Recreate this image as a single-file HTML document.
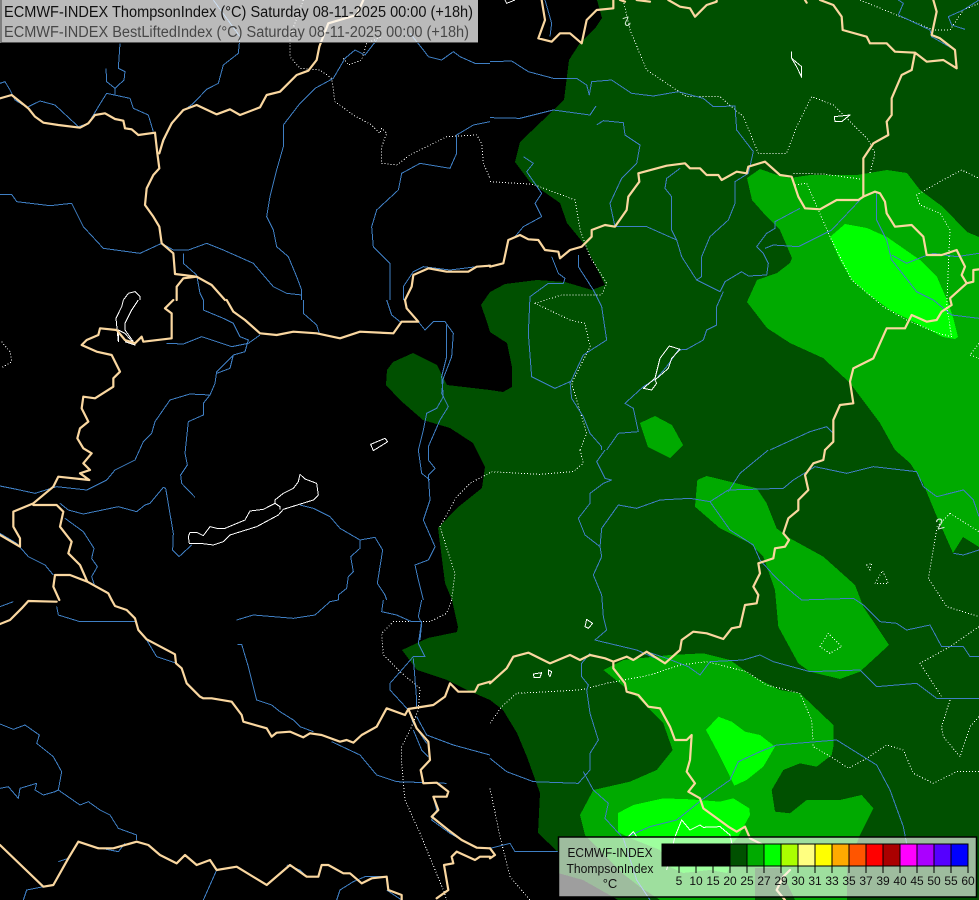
<!DOCTYPE html>
<html><head><meta charset="utf-8"><style>
html,body{margin:0;padding:0;background:#000}
svg{display:block}
path{fill:none;stroke-linejoin:round}
.b path,path.b{stroke:#fad7a0;stroke-width:6.6;shape-rendering:auto;stroke-linecap:round}
.r path,path.r{stroke:#3f7fc4;stroke-width:3}
.w path,path.w{stroke:#fff;stroke-width:3}
.d path,path.d{stroke:#fff;stroke-width:3;stroke-dasharray:3 6}
text{font-family:"Liberation Sans",sans-serif}
</style></head><body>
<svg width="979" height="900" viewBox="0 0 979 900" xmlns="http://www.w3.org/2000/svg" style="width:979px;height:900px;overflow:hidden">
<rect width="979" height="900" fill="#000"/>
<g shape-rendering="crispEdges">
<polygon fill="#005000" points="597,0 602,18 596,27 580,43 569,60 564,100 520,142 515,162 530,182 560,203 567,223 585,245 605,285 592,290 565,282 537,280 505,284 490,292 481,305 487,322 490,332 507,343 512,367 512,387 503,392 490,390 447,385 437,365 413,353 393,362 387,370 386,385 400,400 423,420 450,428 473,443 485,467 482,488 457,508 438,528 445,583 452,600 458,627 457,632 428,638 402,650 417,670 447,680 467,690 490,700 503,710 517,733 527,757 540,793 538,833 558,852 558,873 583,880 613,897 618,900 979,900 979,836 972,824 979,820 979,785 957,787 937,807 922,827 920,845 937,877 950,868 979,845 979,845 979,0"/>
<polygon fill="#00aa00" points="747,178 752,200 767,217 780,230 792,258 790,263 777,273 757,280 747,302 767,328 790,343 823,358 850,383 880,423 895,450 910,463 923,483 937,517 953,553 963,537 979,547 979,237 967,232 943,207 920,190 907,173 887,170 857,175 810,175 790,178 777,175 760,169"/>
<polygon fill="#00ff00" points="830,237 845,224 867,228 887,237 920,260 937,277 947,300 953,317 958,337 955,339 943,337 920,325 890,310 867,293 852,280 840,260"/>
<polygon fill="#00aa00" points="640,423 655,416 672,425 683,445 670,458 648,447"/>
<g transform="translate(490,450) scale(.33333)">
<polygon fill="#00aa00" points="615,170 622,90 650,78 800,115 830,160 860,235 900,265 1000,320 1095,405 1120,470 1197,585 1110,665 1050,687 960,665 925,640 865,530 855,420 820,320 780,280 690,235"/>
<polygon fill="#00aa00" points="340,660 400,630 540,615 640,610 720,630 790,680 870,720 930,730 1030,825 1030,890 1025,915 980,950 930,940 880,960 845,1020 855,1085 900,1090 950,1050 1050,1050 1115,1035 1150,1075 1110,1155 1071,1254 1071,1350 915,1350 870,1254 795,1254 795,1350 510,1350 450,1311 396,1269 285,1155 270,1095 310,1020 420,995 500,960 548,900 520,820 440,740"/>
<polygon fill="#00ff00" points="384,1089 430,1065 520,1045 600,1048 690,1055 730,1045 778,1075 780,1095 744,1161 729,1179 720,1251 711,1269 660,1260 579,1269 540,1251 510,1200 420,1164 384,1146"/>
<polygon fill="#00ff00" points="648,840 685,800 725,815 765,845 810,855 855,890 820,950 770,990 733,1007 715,970 680,900"/>
</g>

<g transform="scale(.33333)">
<path class="d" d="M910,0 870,110 870,170 900,205 960,210 995,235 1005,305 1060,345 1115,375 1140,400 1145,385 1160,400 1145,440 1145,490 1190,495 1230,465 1340,410 1430,405 1445,430 1450,490 1470,535M1030,175 1045,195 1085,180 1100,130 1145,110"/>
<path class="r" d="M0,250 15,245 30,270 45,300 85,325M85,320 120,303 165,315 235,380 265,370 295,320 320,280 390,295 400,325 445,345 460,395M360,130 355,205 375,215 372,240 345,265 345,285M318,205 320,245 345,265M640,0 720,110 715,160 670,195 655,250 620,268 580,310 540,340 510,380 480,450M1130,120 1095,165 1065,150 1035,175 1000,235 945,265 900,310 850,375 850,440 830,510 810,590 800,650 820,690 830,740 865,770 890,830 905,870 905,900M1470,365 1420,375 1370,405 1370,460 1350,505 1260,490 1205,520 1195,570 1130,630 1115,680 1120,740 1170,790 1170,900M1230,100 1270,150 1285,170 1325,180 1360,155 1380,170 1425,190 1470,190M0,583 35,583 50,605 150,617 215,610 250,680 310,745 420,760 485,730M485,730 520,750 565,750 620,730 670,750 760,790 820,860 860,880 905,885M550,760 550,790 590,825 600,880 610,900M1210,900 1210,860 1240,815 1270,800 1350,810 1470,795"/>
<path class="b" d="M0,295 35,285 60,305 85,325 105,350 130,368 175,375 240,383 265,370 285,345 315,340 345,357 370,362 375,385 395,388 415,405 465,398 472,460 478,505 460,525 440,565 435,615 460,650 478,680 485,730 520,760 525,822 550,825 590,830 635,855 675,900M478,460 490,420 515,370 550,330 590,315 650,343 690,328 720,345 780,322 800,285 840,275 890,225 925,212 950,180 958,140 985,70 1070,45 1090,0M590,830 550,835 530,860 530,900M1215,900 1235,860 1240,825 1285,805 1340,815 1405,815 1430,800 1470,797"/>
<path class="w" d="M370,900 385,880 405,875 420,890 420,900"/>
</g>

<g transform="translate(0,300) scale(.33333)">
<path class="d" d="M5,125 30,155 35,185 5,203M1470,518 1410,550 1370,590 1320,680 1345,760 1365,820 1355,900"/>
<path class="r" d="M500,130 550,132 605,110 650,125 695,140 745,130M610,0 610,30 670,55 700,70 720,110 745,120 735,155 700,165 650,215 645,250 630,285 570,282 510,300 465,365 455,400 430,425 405,480 345,510 320,540 260,570 170,560 105,580 50,568 0,558M630,285 610,310 610,345 565,365 555,460 562,495 542,525 545,550 585,592M780,105 745,130M700,165 690,205 650,220M910,0 910,40 950,75 958,100M1160,0 1175,45 1200,65M1255,65 1275,90 1300,65 1335,65 1360,100 1355,170 1330,235 1325,280 1345,320 1320,360 1285,440 1285,480 1305,505 1285,525 1290,600 1270,660 1305,740 1285,780 1245,795 1255,840 1270,900M1340,75 1340,170 1325,230 1330,290 1310,325 1280,340 1270,390 1255,450 1265,520 1290,540M180,610 205,630 250,642 355,620 410,635 435,615 450,610 490,562 497,565 520,700 518,750 537,770 575,735M195,655 250,695 282,745 275,775 292,800 275,830 285,860 320,875M0,700 50,730 85,770 135,795 160,825M900,615 940,625 990,650 1020,685 1080,720 1125,712 1148,750 1132,850 1155,885 1160,900M1080,720 1080,745 1052,770 1060,815 1045,830 1040,865 1015,885 1015,900"/>
<path class="w" d="M570,697 590,697 610,707 630,680 650,685 675,685 735,660 750,633 790,628 825,610 825,600 850,580 880,565 895,545 900,523 915,537 950,550 955,585 940,600 850,628 835,645 770,680 690,705 670,725 640,735 600,730 568,730 565,710ZM825,610 840,620 840,628M1112,433 1155,415 1163,425 1120,452ZM370,0 365,20 348,55 355,125 355,90 375,100 405,135 375,125M415,0 395,30 375,70 375,90 400,125"/>
<path class="b" d="M520,0 495,25 515,40 515,115 430,125 425,110 405,130 375,120 350,90 300,85 295,105 260,120 245,135 290,155 335,165 360,215 340,235 340,260 285,295 250,290 245,325 265,365 240,385 232,415 250,445 275,460 250,490 270,510 240,520 268,540 175,530 160,560 100,610 40,635 40,680 60,715 60,740 0,705M100,615 170,615 190,635 180,680 215,725 205,760 240,795 262,845 210,825 165,825 160,860 178,900M262,845 325,880 335,900M680,0 700,35 735,60 780,100 830,105 880,95 950,100 1020,115 1080,95 1180,100 1205,65 1255,65 1220,25 1215,0"/>
</g>

<g transform="translate(0,600) scale(.33333)">
<path class="d" d="M1355,0 1340,40 1290,65 1180,65 1145,100 1150,165 1200,215 1260,265 1255,330 1230,390 1205,440 1205,490 1215,600 1260,700 1330,870 1340,900"/>
<path class="r" d="M0,20 40,5M170,20 175,45 240,65 340,65 405,65M440,120 470,170 530,190M710,60 760,45 880,55 945,45 990,5 1015,0M712,133 725,133 745,200 770,300 815,315 840,335 880,360 900,380 940,395M995,425 1080,465 1130,525 1190,545 1340,550M1150,0 1145,35 1190,45 1235,65 1265,65 1255,130 1275,170 1240,170 1170,250 1170,270 1225,330M1265,0 1255,50 1265,70 1260,120M1240,175 1250,300 1250,320M1225,330 1240,370 1280,430M1250,350 1280,405 1360,435 1470,465M1240,390 1265,450 1285,470M1300,590 1310,630 1295,660 1350,700 1420,740M0,372 40,388 75,375 118,405 110,430 160,470 185,515 175,570 240,615 265,605 300,630 330,645 355,685 410,705 410,720M0,565 25,560 55,595 60,565 110,550 105,570 130,585 165,575 175,570M375,730 355,755 280,740M70,900 80,870 130,860M175,785 205,775M610,900 650,810M1010,900 1020,870 1060,845 1095,830 1150,830M1160,870 1205,900M860,795 900,810 920,830"/>
<path class="b" d="M0,72 30,60 65,25 85,3 170,5M335,0 345,18 380,30 405,55 415,90 440,118 525,163 528,190 545,205 560,250 600,290 610,295 635,295 695,305 725,345 730,365 800,385 815,410 830,398 870,395 910,412 930,400 965,405 1020,425 1040,420 1060,428 1085,405 1130,380 1160,325 1215,345 1225,327 1300,315 1335,290 1350,250 1375,275 1425,275 1435,255 1470,245M1225,327 1250,385 1285,425 1290,480 1262,510 1270,550 1310,548 1345,575 1340,590 1300,590 1315,630 1295,650 1345,690 1385,720 1430,743 1470,745M0,735 130,860 160,855 205,775 235,725 295,745 340,745 410,725 445,735 480,765 530,790 555,765 590,795 630,780 650,810 710,800 800,855 870,795 920,830 955,830 965,795 985,795 1030,820 1050,820 1085,850 1115,835 1160,830 1165,870 1205,885 1205,900M1470,770 1440,770 1425,780 1370,755 1355,770 1360,790 1332,795 1345,870 1310,895"/>
</g>

<g transform="translate(490,0) scale(.33333)">
<path class="d" d="M400,0 420,90 470,210 590,290 690,290 760,350 805,460 890,460 920,380 965,290 1030,315 1135,420 1155,460 1140,520M910,520 1000,522 1115,538M915,555 950,550 1020,710 1085,840 1180,920 1250,960 1345,1000 1385,1010 1370,920 1380,690 1350,640 1290,615 1280,585 1350,545 1415,510 1467,535M0,545 130,553 255,600 270,690 300,770 350,850 335,885 215,885 135,910 240,960 285,970 300,1040 245,1150 290,1300 270,1350M1467,1030 1440,1065 1467,1075M1110,0 1330,90 1380,90 1420,30 1467,10"/>
<path class="r" d="M165,0 185,70 180,110M0,185 65,183 115,215 190,235 260,235 290,255 298,285 305,245 365,240 425,280 490,288 565,275 640,295 670,320 735,318 740,390 790,455 775,520 735,545 735,610 715,660 660,710 635,770 635,830 620,840 690,875 705,845 755,815 775,828 830,825 835,790 820,760 800,740 830,700 855,685 855,665 930,625M0,353 90,355 190,330 300,345 318,318M320,375 340,362 400,368 405,405 450,435 440,490 395,535 360,610 375,680 470,680 560,720 575,770 620,840M570,505 530,535 525,565 545,590 545,690 560,720M825,745 850,735 925,740 1025,690 1110,600M1160,580 1160,660 1190,720 1205,780 1280,875 1330,900 1385,945 1467,955M1205,765 1250,790 1300,770 1330,760 1400,770 1467,760M100,470 130,490 110,515 155,580 135,610 155,650 100,680 75,710M185,770 205,820 225,835 220,850 175,850 120,890 115,1000 125,1130 195,1165 240,1145 245,1195 280,1250 300,1300 335,1340 335,1350M265,765 265,800 310,870 335,920 350,1020 280,1065 240,1150M1467,0 1420,30 1375,50 1385,75 1425,88M1225,0 1240,10 1225,45 1320,90 1325,110 1395,150M700,875 680,920 680,975 650,990 640,1020 590,1048 565,1050 530,1100 500,1135 460,1160 405,1210 430,1225 445,1295 385,1300 350,1350M840,1350 960,1295 1010,1280 1030,1300"/>
<path class="w" d="M905,155 905,175 935,200 935,232 920,200 905,175M1033,350 1080,345 1055,365 1035,365ZM538,1038 570,1048 545,1075 535,1105 495,1140 500,1150 485,1170 460,1165 495,1135 510,1075ZM45,0 50,10 75,0"/>
<path class="b" d="M155,0 165,60 145,115 185,125 210,100 240,100 275,130 290,60 320,30 370,25 370,0M390,0 405,5M440,0 480,5M535,0 570,20 600,25 615,50 650,15 680,5 680,0M945,0 950,8M990,0 1030,15 1055,50 1058,90 1130,110 1140,130 1190,130 1215,155 1275,158 1265,210 1235,225 1205,295 1205,345 1190,365 1195,405 1150,430 1120,475 1120,590 1105,600 1040,600 990,628 945,625 925,590 905,530 870,525 825,485 775,500 770,520 740,515 695,540 685,525 650,525 630,505 600,505 585,490 530,497 445,520 448,545 415,590 410,630 375,680 345,675 305,690 305,710 275,740 240,750 210,775 205,755 165,750 145,720 115,718 90,705 55,720 40,790 0,800M1120,590 1155,575 1170,580 1185,605 1190,640 1215,680 1265,675 1300,710 1310,765 1355,765 1400,750 1425,800 1415,825 1430,850 1380,895 1385,915 1355,935 1340,960 1310,965 1265,945 1245,985 1190,985 1150,1075 1090,1105 1080,1145 1090,1210 1050,1215 1030,1260 1030,1325 1005,1350M1275,158 1310,185 1360,180 1400,205 1395,150 1350,115 1325,105 1340,35 1330,0M1430,850 1450,845 1450,810 1467,808"/>
</g>

<g transform="translate(490,450) scale(.33333)">
<path class="d" d="M270,0 280,40 250,65 150,73 0,65M0,820 35,770 80,730 270,720 350,700 480,675 570,645 650,635 770,665 830,705 930,730 965,810 970,890 1030,925 1075,955 1130,925 1190,885 1240,900 1270,970 1330,1000 1400,965 1467,965M1340,240 1315,385 1370,470 1467,500M1467,530 1380,590 1290,640 1355,740M1380,750 1355,830 1360,860 1410,920 1440,830 1467,800M1380,190 1467,245M1340,230 1380,190M990,590 1015,550 1055,590 1020,610ZM1155,400 1178,362 1195,400ZM1130,345 1145,340 1140,360ZM0,1015 30,1160 60,1280 120,1350"/>
<path class="r" d="M345,0 320,35 345,85 365,90 340,100 300,130 300,160 265,205 285,255 330,290 335,320 310,375 335,435 340,500 350,540 315,570 335,575 440,600 520,635M330,290 335,235 385,165 440,175 510,150 600,145 660,155 715,120 880,115 910,90 975,50 1070,70 1150,50 1280,65 1300,110 1340,140 1420,120 1450,150 1467,200M835,0 750,70 715,125M660,155 720,240 790,285 810,330 855,380 910,430 935,450 1090,445 1120,465 1170,515 1220,520 1250,540 1320,525 1355,590 1420,590 1440,620 1467,620M300,610 275,640 275,680 295,705 290,720 300,790 325,870 300,910 300,960 265,1000 130,995 50,965 0,925M470,605 530,625 595,650 630,675 660,635 760,630 810,615 850,635 960,665 1110,660 1160,710 1280,700 1340,745 1467,745M280,965 310,1020 355,1060 345,1105 400,1165 440,1290 480,1350M635,1050 720,990 745,935 810,905 860,885 1040,870 1160,945 1200,1020 1240,1130 1250,1180M1390,310 1420,315 1467,300M0,1195 60,1180 75,1205 205,1205M635,1050 560,1110 480,1130 400,1165"/>
<path class="w" d="M130,672 155,668 150,682 132,682ZM175,660 185,665 180,680 175,672ZM290,508 308,520 295,535 285,530ZM530,1260 555,1160 575,1110 600,1140 630,1125 640,1132 690,1130 720,1155 730,1200M415,1160 430,1145 440,1160"/>
<path class="b" d="M1005,0 1000,30 970,40 945,75 955,120 925,150 925,180 895,205 880,250 897,270 885,290 855,295 850,325 805,340 810,370 790,410 805,435 800,460 765,465 750,530 725,535 700,567 650,550 610,545 575,570 570,600 525,640 470,605 430,630 410,620 370,635 345,625 300,615 270,630 240,615 180,640 115,608 70,620 50,655 0,700M370,635 370,655 405,700 410,725 445,735 475,770 510,775 540,830 555,870 590,870 605,855 600,930 590,965 615,1000 595,1025 630,1045 640,1075 715,1130 740,1145 765,1130 780,1165 830,1190M900,1260 880,1280 860,1320 885,1350M0,1195 15,1215 0,1225"/>
</g>
</g>

<text x="627" y="27" font-size="13" fill="#cfe6cf" transform="rotate(160 627 22)" text-anchor="middle">2</text>
<text x="940" y="529" font-size="15" fill="#cfe6cf" transform="rotate(-15 940 524)" text-anchor="middle">2</text>

<!-- title -->
<rect x="0" y="0" width="478" height="43" fill="#fff" fill-opacity=".73"/>
<rect x="0.5" y="0" width="1" height="43" fill="#444"/>
<rect x="1" y="42" width="477" height="1" fill="#555"/>
<text x="4" y="17" font-size="15.5" fill="#111" textLength="469" lengthAdjust="spacingAndGlyphs">ECMWF-INDEX ThompsonIndex (°C) Saturday 08-11-2025 00:00 (+18h)</text>
<text x="4" y="37" font-size="15.5" fill="#474747" textLength="465" lengthAdjust="spacingAndGlyphs">ECMWF-INDEX BestLiftedIndex (°C) Saturday 08-11-2025 00:00 (+18h)</text>

<!-- legend -->
<rect x="558.5" y="837" width="418" height="60" fill="#fff" fill-opacity=".62" stroke="#000" stroke-width="1.5"/>
<g shape-rendering="crispEdges" stroke="#000" stroke-width="1">
<rect x="662" y="844" width="17" height="22" fill="#000"/>
<rect x="679" y="844" width="17" height="22" fill="#000"/>
<rect x="696" y="844" width="17" height="22" fill="#000"/>
<rect x="713" y="844" width="17" height="22" fill="#000"/>
<rect x="730" y="844" width="17" height="22" fill="#005000"/>
<rect x="747" y="844" width="17" height="22" fill="#00aa00"/>
<rect x="764" y="844" width="17" height="22" fill="#00ff00"/>
<rect x="781" y="844" width="17" height="22" fill="#aaff00"/>
<rect x="798" y="844" width="17" height="22" fill="#ffff80"/>
<rect x="815" y="844" width="17" height="22" fill="#ffff00"/>
<rect x="832" y="844" width="17" height="22" fill="#ffaa00"/>
<rect x="849" y="844" width="17" height="22" fill="#ff5500"/>
<rect x="866" y="844" width="17" height="22" fill="#ff0000"/>
<rect x="883" y="844" width="17" height="22" fill="#aa0000"/>
<rect x="900" y="844" width="17" height="22" fill="#ff00ff"/>
<rect x="917" y="844" width="17" height="22" fill="#aa00ff"/>
<rect x="934" y="844" width="17" height="22" fill="#5500ff"/>
<rect x="951" y="844" width="17" height="22" fill="#0000ff"/>
<path d="M679,866V873M696,866V873M713,866V873M730,866V873M747,866V873M764,866V873M781,866V873M798,866V873M815,866V873M832,866V873M849,866V873M866,866V873M883,866V873M900,866V873M917,866V873M934,866V873M951,866V873M968,866V873" stroke="#000" stroke-width="1" style="fill:none"/>
</g>
<g font-size="12" fill="#111" text-anchor="middle">
<text x="610" y="857" font-size="13" textLength="85" lengthAdjust="spacingAndGlyphs">ECMWF-INDEX</text>
<text x="610" y="873" font-size="13" textLength="87" lengthAdjust="spacingAndGlyphs">ThompsonIndex</text>
<text x="610" y="888" font-size="13">°C</text>
<text x="679" y="885">5</text><text x="696" y="885">10</text><text x="713" y="885">15</text><text x="730" y="885">20</text><text x="747" y="885">25</text><text x="764" y="885">27</text><text x="781" y="885">29</text><text x="798" y="885">30</text><text x="815" y="885">31</text><text x="832" y="885">33</text><text x="849" y="885">35</text><text x="866" y="885">37</text><text x="883" y="885">39</text><text x="900" y="885">40</text><text x="917" y="885">45</text><text x="934" y="885">50</text><text x="951" y="885">55</text><text x="968" y="885">60</text>
</g>
</svg>
</body></html>
